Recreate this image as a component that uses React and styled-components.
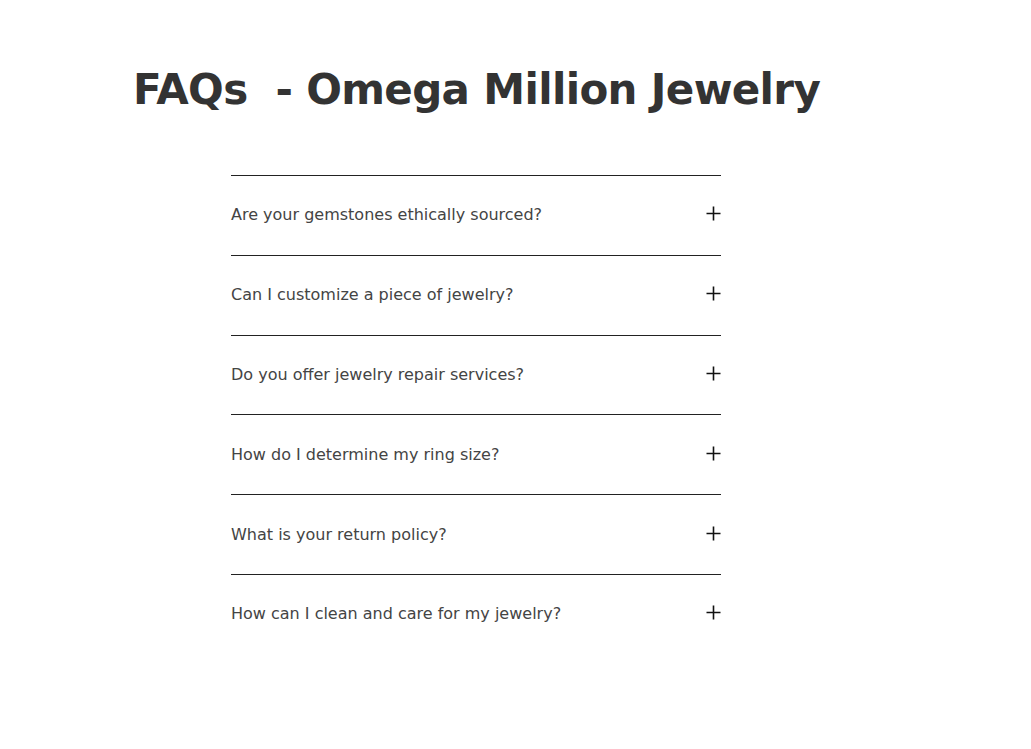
import React from "react";
import styled, { createGlobalStyle } from "styled-components";

const Global = createGlobalStyle`
  html, body { margin: 0; padding: 0; background: #fff; }
  body { font-family: "DejaVu Sans", "Open Sans", sans-serif; color: #333; }
  *, *::before, *::after { box-sizing: border-box; }
`;

const Page = styled.main`
  padding: 62px 0 0 133px;
`;

const Title = styled.h1`
  margin: 0;
  font-family: "DejaVu Sans", sans-serif;
  font-weight: 700;
  font-size: 42px;
  line-height: 56px;
  color: #333;
  letter-spacing: -0.65px;
  white-space: pre;
`;

const List = styled.div`
  width: 490px;
  margin: 57px 0 0 98px;
`;

const Item = styled.div`
  border-top: 1px solid #222;
  height: 79.8px;
  display: flex;
  align-items: center;
  justify-content: space-between;
  padding-bottom: 1px;
`;

const Question = styled.span`
  font-family: "DejaVu Sans", sans-serif;
  font-size: 16px;
  font-weight: 400;
  color: #444;
`;

const Plus = styled.svg`
  width: 15px;
  height: 15px;
  flex: none;
  margin-top: -2px;
`;

const questions = [
  "Are your gemstones ethically sourced?",
  "Can I customize a piece of jewelry?",
  "Do you offer jewelry repair services?",
  "How do I determine my ring size?",
  "What is your return policy?",
  "How can I clean and care for my jewelry?",
];

export default function App() {
  return (
    <>
      <Global />
      <Page>
        <Title>{"FAQs  - Omega Million Jewelry"}</Title>
        <List>
          {questions.map((q) => (
            <Item key={q}>
              <Question>{q}</Question>
              <Plus viewBox="0 0 15 15">
                <path d="M7.5 0.5V14.5M0.5 7.5H14.5" stroke="#111" strokeWidth="1.6" fill="none" />
              </Plus>
            </Item>
          ))}
        </List>
      </Page>
    </>
  );
}
